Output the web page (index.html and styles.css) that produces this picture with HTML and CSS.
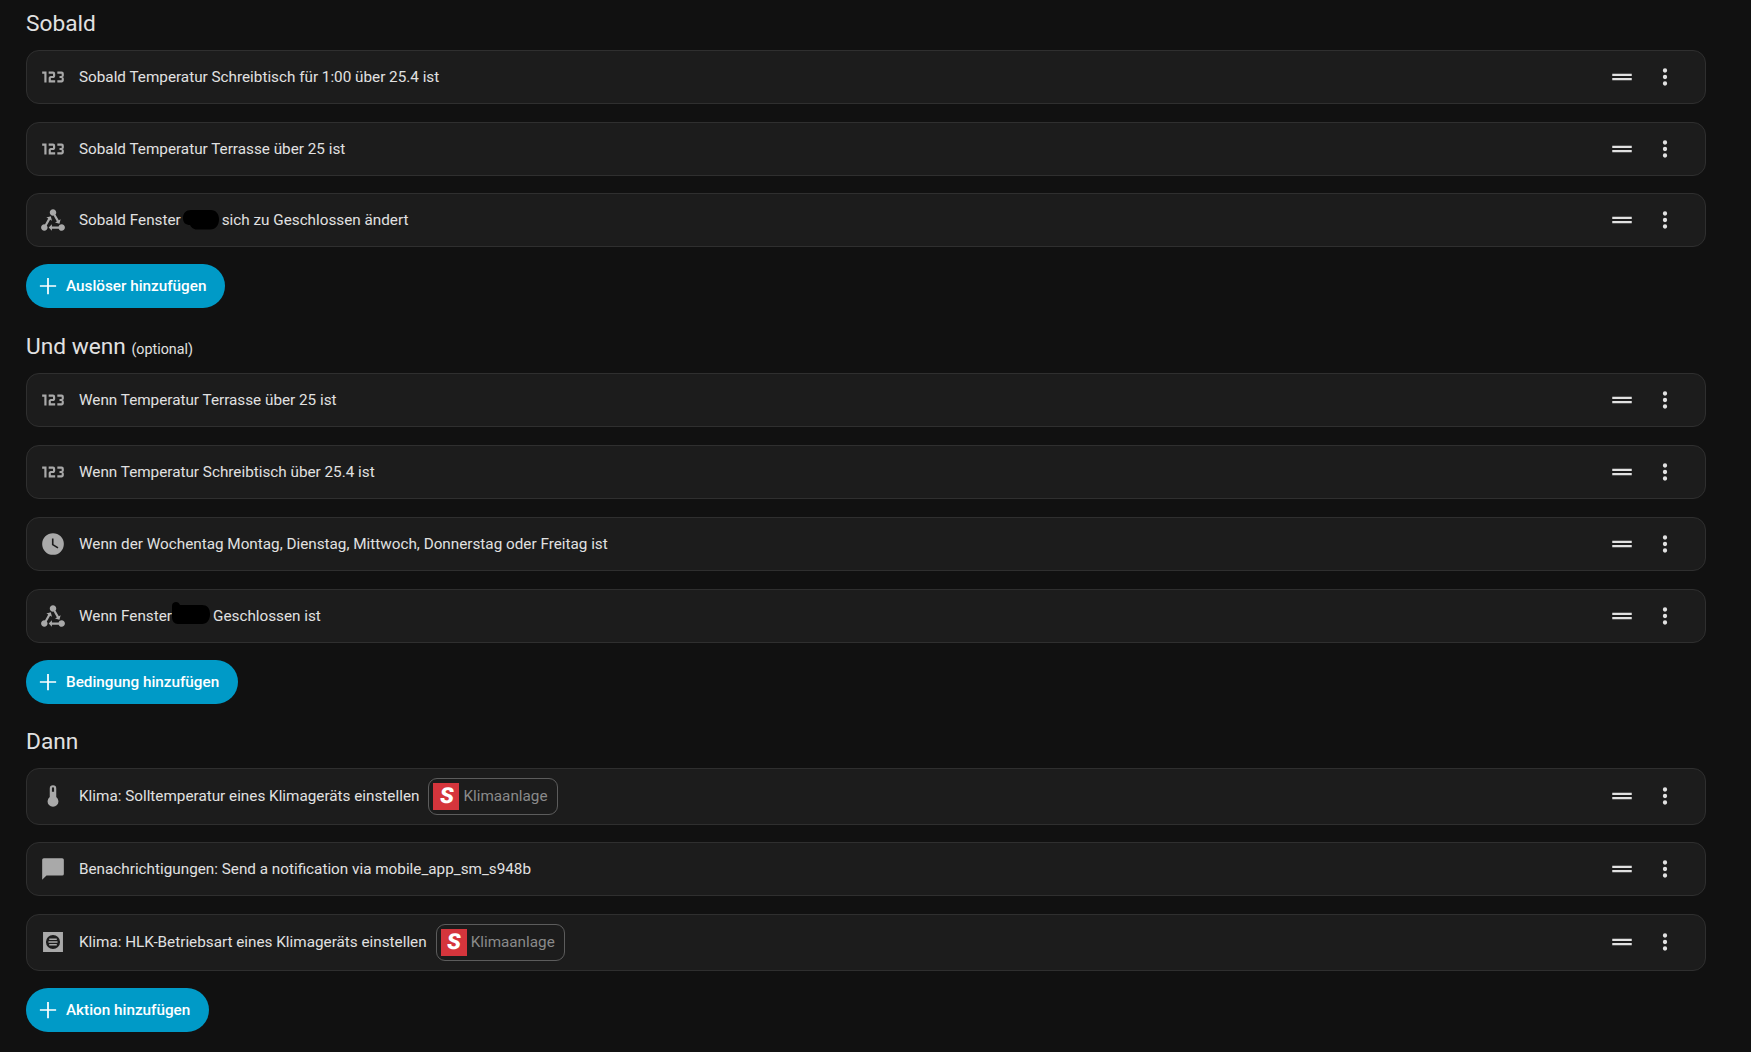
FILE: index.html
```html
<!DOCTYPE html>
<html lang="de">
<head>
<meta charset="utf-8">
<title>Automation</title>
<link rel="stylesheet" href="styles.css">
</head>
<body>
<svg class="defs" width="0" height="0" aria-hidden="true">
  <symbol id="i-num" viewBox="0 0 24 24"><path d="M4,17V9H2V7H6V17H4M22,15C22,16.11 21.1,17 20,17H16V15H20V13H18V11H20V9H16V7H20A2,2 0 0,1 22,9V10.5A1.5,1.5 0 0,1 20.5,12A1.5,1.5 0 0,1 22,13.5V15M14,15V17H8V13C8,11.89 8.9,11 10,11H12V9H8V7H12A2,2 0 0,1 14,9V11C14,12.11 13.1,13 12,13H10V15H14Z"/></symbol>
  <symbol id="i-state" viewBox="0 0 24 24"><path d="M6.27 17.05C6.72 17.58 7 18.25 7 19C7 20.66 5.66 22 4 22S1 20.66 1 19 2.34 16 4 16C4.18 16 4.36 16 4.53 16.05L7.6 10.69L5.86 9.7L9.95 8.58L11.07 12.67L9.33 11.68L6.27 17.05M20 16C18.7 16 17.6 16.84 17.18 18H11V16L8 19L11 22V20H17.18C17.6 21.16 18.7 22 20 22C21.66 22 23 20.66 23 19S21.66 16 20 16M12 8C12.18 8 12.36 8 12.53 7.95L15.6 13.31L13.86 14.3L17.95 15.42L19.07 11.33L17.33 12.32L14.27 6.95C14.72 6.42 15 5.75 15 5C15 3.34 13.66 2 12 2S9 3.34 9 5 10.34 8 12 8Z"/></symbol>
  <symbol id="i-clock" viewBox="0 0 24 24"><path d="M12,2A10,10 0 0,1 22,12A10,10 0 0,1 12,22A10,10 0 0,1 2,12A10,10 0 0,1 12,2M12.5,7H11V13L16.2,16.2L17,14.9L12.5,12.2V7Z"/></symbol>
  <symbol id="i-therm" viewBox="0 0 24 24"><path d="M15 13V5A3 3 0 0 0 9 5V13A5 5 0 1 0 15 13M12 4A1 1 0 0 1 13 5V8H11V5A1 1 0 0 1 12 4Z"/></symbol>
  <symbol id="i-msg" viewBox="0 0 24 24"><path d="M20.500,2H3.500A1.500,1.500 0 0,0 2,3.500V22L6,18H20.500A1.500,1.500 0 0,0 22,16.500V3.500A1.500,1.500 0 0,0 20.500,2Z"/></symbol>
  <symbol id="i-hvac" viewBox="0 0 24 24"><path fill-rule="evenodd" d="M2.800,2.800H21.200V21.200H2.800ZM12,5.500A6.500,6.500 0 1,0 12,18.500A6.500,6.500 0 1,0 12,5.500Z"/><path d="M8.500,8.800H15.500V10.200H8.500ZM7.800,11.300H16.200V12.700H7.800ZM8.500,13.800H15.500V15.200H8.500Z"/></symbol>
  <symbol id="i-drag" viewBox="0 0 24 24"><path d="M21 11H3V9H21V11M21 13H3V15H21V13Z"/></symbol>
  <symbol id="i-dots" viewBox="0 0 24 24"><path d="M12,16A2,2 0 0,1 14,18A2,2 0 0,1 12,20A2,2 0 0,1 10,18A2,2 0 0,1 12,16M12,10A2,2 0 0,1 14,12A2,2 0 0,1 12,14A2,2 0 0,1 10,12A2,2 0 0,1 12,10M12,4A2,2 0 0,1 14,6A2,2 0 0,1 12,8A2,2 0 0,1 10,6A2,2 0 0,1 12,4Z"/></symbol>
  <symbol id="i-plus" viewBox="0 0 24 24"><path d="M19.500,12.800H12.800V19.500H11.200V12.800H4.500V11.200H11.200V4.500H12.800V11.200H19.500V12.800Z"/></symbol>
</svg>

<main class="page">
  <section class="section section-first">
    <h2 class="heading">Sobald</h2>
    <div class="list list-tight">
      <div class="row"><svg class="icon"><use href="#i-num"/></svg><div class="label">Sobald Temperatur Schreibtisch für 1:00 über 25.4 ist</div><svg class="handle"><use href="#i-drag"/></svg><svg class="menu"><use href="#i-dots"/></svg></div>
      <div class="row"><svg class="icon"><use href="#i-num"/></svg><div class="label">Sobald Temperatur Terrasse über 25 ist</div><svg class="handle"><use href="#i-drag"/></svg><svg class="menu"><use href="#i-dots"/></svg></div>
      <div class="row"><svg class="icon"><use href="#i-state"/></svg><div class="label"><span>Sobald Fenster</span><svg class="blob blob-a" viewBox="0 0 36 20"><path d="M8 0H28C33 0 36 4 36 9C36 15 33 19.500 27 19.500H14C10 19.500 8 17 7 15C3 15 0 13 0 8C0 3 3 0 8 0Z"/></svg><span>sich zu Geschlossen ändert</span></div><svg class="handle"><use href="#i-drag"/></svg><svg class="menu"><use href="#i-dots"/></svg></div>
    </div>
    <button class="add" type="button"><svg class="plus"><use href="#i-plus"/></svg>Auslöser hinzufügen</button>
  </section>

  <section class="section">
    <h2 class="heading">Und wenn <span class="optional">(optional)</span></h2>
    <div class="list">
      <div class="row"><svg class="icon"><use href="#i-num"/></svg><div class="label">Wenn Temperatur Terrasse über 25 ist</div><svg class="handle"><use href="#i-drag"/></svg><svg class="menu"><use href="#i-dots"/></svg></div>
      <div class="row"><svg class="icon"><use href="#i-num"/></svg><div class="label">Wenn Temperatur Schreibtisch über 25.4 ist</div><svg class="handle"><use href="#i-drag"/></svg><svg class="menu"><use href="#i-dots"/></svg></div>
      <div class="row"><svg class="icon"><use href="#i-clock"/></svg><div class="label">Wenn der Wochentag Montag, Dienstag, Mittwoch, Donnerstag oder Freitag ist</div><svg class="handle"><use href="#i-drag"/></svg><svg class="menu"><use href="#i-dots"/></svg></div>
      <div class="row"><svg class="icon"><use href="#i-state"/></svg><div class="label"><span>Wenn Fenster</span><svg class="blob blob-b" viewBox="0 0 38 22"><path d="M0 4C0 1 2 0 4 0C6 0 7 1 8 3H30C35 3 38 6 38 12C38 18 35 22 30 22H6C2 22 0 19 0 15Z"/></svg><span>Geschlossen ist</span></div><svg class="handle"><use href="#i-drag"/></svg><svg class="menu"><use href="#i-dots"/></svg></div>
    </div>
    <button class="add" type="button"><svg class="plus"><use href="#i-plus"/></svg>Bedingung hinzufügen</button>
  </section>

  <section class="section">
    <h2 class="heading">Dann</h2>
    <div class="list list-tight">
      <div class="row row-chip"><svg class="icon"><use href="#i-therm"/></svg><div class="label">Klima: Solltemperatur eines Klimageräts einstellen<span class="chip"><span class="logo"><span class="logo-s">S</span></span><span class="chip-text">Klimaanlage</span></span></div><svg class="handle"><use href="#i-drag"/></svg><svg class="menu"><use href="#i-dots"/></svg></div>
      <div class="row"><svg class="icon"><use href="#i-msg"/></svg><div class="label">Benachrichtigungen: Send a notification via mobile_app_sm_s948b</div><svg class="handle"><use href="#i-drag"/></svg><svg class="menu"><use href="#i-dots"/></svg></div>
      <div class="row row-chip"><svg class="icon"><use href="#i-hvac"/></svg><div class="label">Klima: HLK-Betriebsart eines Klimageräts einstellen<span class="chip"><span class="logo"><span class="logo-s">S</span></span><span class="chip-text">Klimaanlage</span></span></div><svg class="handle"><use href="#i-drag"/></svg><svg class="menu"><use href="#i-dots"/></svg></div>
    </div>
    <button class="add" type="button"><svg class="plus"><use href="#i-plus"/></svg>Aktion hinzufügen</button>
  </section>
</main>
</body>
</html>
```

FILE: styles.css
```css
* { box-sizing: border-box; }

html, body {
  margin: 0;
  background: #111111;
}

body {
  font-family: Roboto, "Liberation Sans", sans-serif;
  color: #e1e1e1;
  height: 1052px;
  overflow: hidden;
}

.defs { display: block; height: 0; }

.page {
  display: flex;
  flex-direction: column;
  padding: 0 45px 0 26px;
}

.section { margin-top: 14.300px; }
.section-first { margin-top: 0; }

.heading {
  margin: 0;
  height: 50px;
  padding-top: 10px;
  font-size: 22.700px;
  line-height: 28px;
  font-weight: 400;
  color: #e1e1e1;
}

.optional {
  font-size: 14.300px;
  font-weight: 400;
}

.list {
  display: flex;
  flex-direction: column;
  gap: 18px;
}

.list-tight { gap: 17.600px; }

.row {
  display: flex;
  align-items: center;
  height: 54px;
  padding: 0 27px 0 12.500px;
  background: #1c1c1c;
  border: 1px solid #2f2f2f;
  border-radius: 13px;
}

.row-chip { height: 56.600px; }

.icon {
  flex: none;
  width: 26px;
  height: 26px;
  margin-right: 13.500px;
  fill: #a9a9a9;
}

.label {
  flex: 1;
  display: flex;
  align-items: center;
  font-size: 15.270px;
  line-height: 20px;
  color: #e1e1e1;
}

.blob {
  flex: none;
  fill: #000000;
}

.blob-a {
  width: 36px;
  height: 20px;
  margin: 0 3px 0 2px;
}

.blob-b {
  width: 38px;
  height: 22px;
  margin: -6px 3px 0 0;
}

.chip {
  display: inline-flex;
  align-items: center;
  gap: 4px;
  height: 37px;
  margin-left: 9px;
  padding: 0 9px 0 4px;
  border: 1px solid #5c5c5c;
  border-radius: 9px;
}

.logo {
  display: flex;
  align-items: center;
  justify-content: center;
  width: 26px;
  height: 27px;
  background: #d5353c;
  color: #ffffff;
  font-size: 22px;
  font-weight: 900;
}

.logo-s {
  display: block;
  transform: skewX(-7deg);
}

.chip-text {
  font-size: 15.270px;
  color: #8a8a8a;
}

.handle {
  flex: none;
  width: 26px;
  height: 26px;
  margin-right: 17px;
  fill: #e1e1e1;
}

.menu {
  flex: none;
  width: 26px;
  height: 26px;
  fill: #e1e1e1;
}

.add {
  display: inline-flex;
  align-items: center;
  height: 44px;
  margin-top: 17.200px;
  padding: 0 19px 0 9px;
  border: 0;
  border-radius: 22px;
  background: #009ac7;
  color: #ffffff;
  font-family: inherit;
  font-size: 15.270px;
  font-weight: 500;
}

.plus {
  flex: none;
  width: 26px;
  height: 26px;
  margin-right: 5px;
  fill: #ffffff;
}
```
